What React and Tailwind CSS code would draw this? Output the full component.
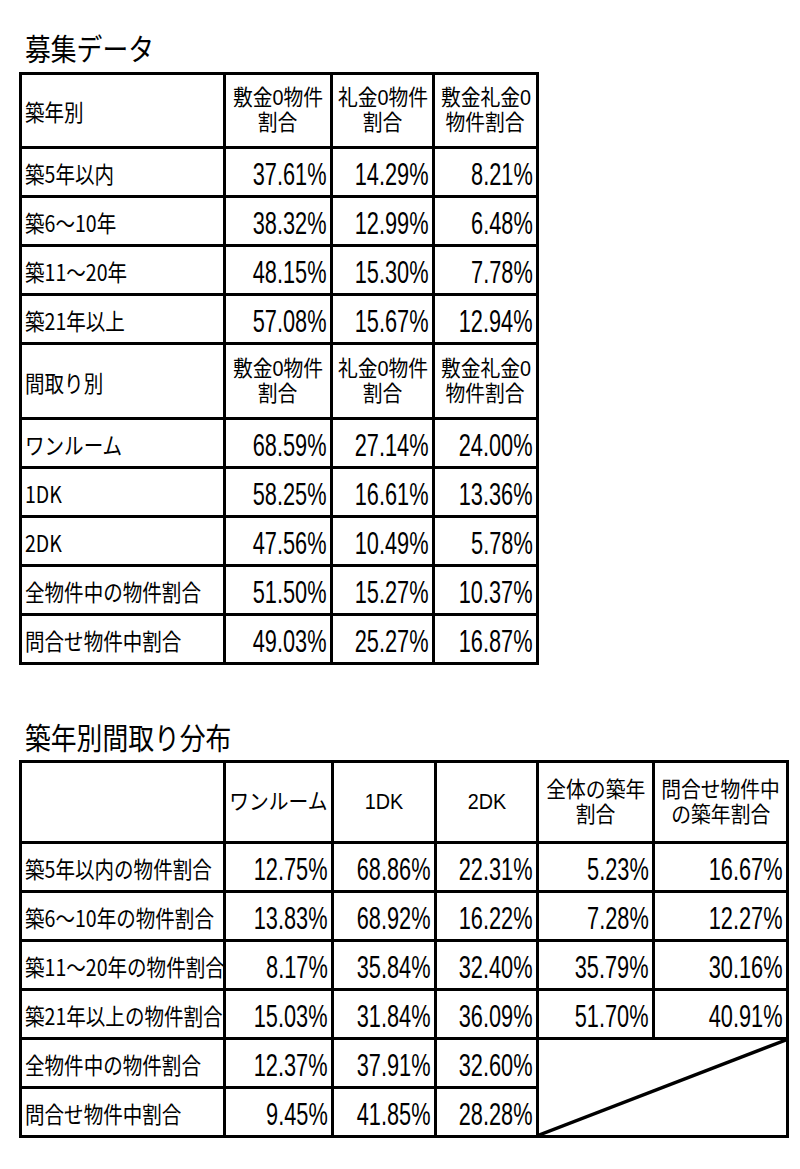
const table1 = [
  ["築5年以内", "37.61%", "14.29%", "8.21%"],
  ["築6～10年", "38.32%", "12.99%", "6.48%"],
  ["築11～20年", "48.15%", "15.30%", "7.78%"],
  ["築21年以上", "57.08%", "15.67%", "12.94%"],
];

const table1b = [
  ["ワンルーム", "68.59%", "27.14%", "24.00%"],
  ["1DK", "58.25%", "16.61%", "13.36%"],
  ["2DK", "47.56%", "10.49%", "5.78%"],
  ["全物件中の物件割合", "51.50%", "15.27%", "10.37%"],
  ["問合せ物件中割合", "49.03%", "25.27%", "16.87%"],
];

const table2 = [
  ["築5年以内の物件割合", "12.75%", "68.86%", "22.31%", "5.23%", "16.67%"],
  ["築6～10年の物件割合", "13.83%", "68.92%", "16.22%", "7.28%", "12.27%"],
  ["築11～20年の物件割合", "8.17%", "35.84%", "32.40%", "35.79%", "30.16%"],
  ["築21年以上の物件割合", "15.03%", "31.84%", "36.09%", "51.70%", "40.91%"],
];

const table2b = [
  ["全物件中の物件割合", "12.37%", "37.91%", "32.60%"],
  ["問合せ物件中割合", "9.45%", "41.85%", "28.28%"],
];

function Label({ children }) {
  return (
    <div className="flex items-center bg-white pl-[3px] pt-[2px]">
      <span className="inline-block origin-left scale-x-[0.85] whitespace-nowrap text-[23px]">{children}</span>
    </div>
  );
}

function Head({ lines }) {
  return (
    <div className="flex flex-col items-center justify-center bg-white pt-[1px] font-['Liberation_Sans','Noto_Sans_CJK_JP',sans-serif]">
      {lines.map((l) => (
        <span key={l} className="block origin-center scale-x-[0.92] whitespace-nowrap text-[21.5px] leading-[25px]">
          {l}
        </span>
      ))}
    </div>
  );
}

function Num({ v }) {
  return (
    <div className="flex items-center justify-end bg-white pr-[3px] pt-[3px]">
      <span className="inline-block origin-right scale-x-[0.68] whitespace-nowrap font-['Liberation_Sans',Arial,sans-serif] text-[32px] leading-none">
        {v}
      </span>
    </div>
  );
}

function Title({ children }) {
  return (
    <div className="ml-[25px] h-[30px] text-[30px] leading-[30px]">
      <span className="inline-block origin-left scale-x-[0.86] whitespace-nowrap">{children}</span>
    </div>
  );
}

const rateHeads = [["敷金0物件", "割合"], ["礼金0物件", "割合"], ["敷金礼金0", "物件割合"]];

export default function App() {
  return (
    <div className="min-h-screen bg-white pt-[32px] font-['Noto_Sans_CJK_JP',sans-serif] text-black">
      <Title>募集データ</Title>
      <div className="ml-[19px] mt-[10px] grid w-fit grid-cols-[201px_104px_99px_101px] grid-rows-[71px_repeat(4,46px)_72px_repeat(5,46px)] gap-[3px] bg-black p-[3px]">
        <Label>築年別</Label>
        {rateHeads.map((h) => (
          <Head key={h.join()} lines={h} />
        ))}
        {table1.map((r) => [
          <Label key={r[0]}>{r[0]}</Label>,
          ...r.slice(1).map((v, i) => <Num key={r[0] + i} v={v} />),
        ])}
        <Label>間取り別</Label>
        {rateHeads.map((h) => (
          <Head key={"b" + h.join()} lines={h} />
        ))}
        {table1b.map((r) => [
          <Label key={r[0]}>{r[0]}</Label>,
          ...r.slice(1).map((v, i) => <Num key={r[0] + i} v={v} />),
        ])}
      </div>

      <div className="mt-[56px]">
        <Title>築年別間取り分布</Title>
      </div>
      <div className="ml-[19px] mt-[9px] grid w-fit grid-cols-[201px_105px_100px_99px_113px_131px] grid-rows-[78px_repeat(6,46px)] gap-[3px] bg-black p-[3px]">
        <div className="bg-white" />
        <Head lines={["ワンルーム"]} />
        <Head lines={["1DK"]} />
        <Head lines={["2DK"]} />
        <Head lines={["全体の築年", "割合"]} />
        <Head lines={["問合せ物件中", "の築年割合"]} />
        {table2.map((r) => [
          <Label key={r[0]}>{r[0]}</Label>,
          ...r.slice(1).map((v, i) => <Num key={r[0] + i} v={v} />),
        ])}
        {table2b.map((r, ri) => [
          <Label key={r[0]}>{r[0]}</Label>,
          ...r.slice(1).map((v, i) => <Num key={r[0] + i} v={v} />),
          ri === 0 ? (
            <div key="blank" className="col-span-2 row-span-2 bg-white">
              <svg className="h-full w-full" viewBox="0 0 100 100" preserveAspectRatio="none">
                <line x1="0" y1="100" x2="100" y2="0" stroke="black" strokeWidth="3.5" vectorEffect="non-scaling-stroke" />
              </svg>
            </div>
          ) : null,
        ])}
      </div>
    </div>
  );
}
